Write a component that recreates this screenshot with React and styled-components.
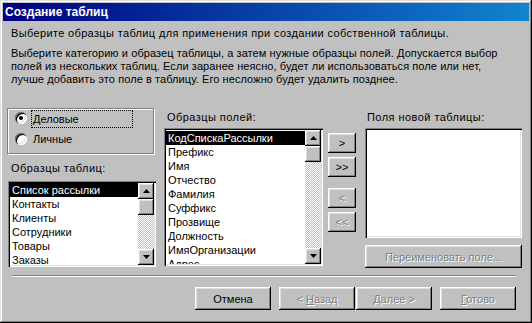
import React from "react";
import styled, { createGlobalStyle } from "styled-components";

const GlobalStyle = createGlobalStyle`
  body {
    margin: 0;
    background: #c0c0c0;
  }
  * {
    box-sizing: border-box;
  }
`;

const Window = styled.div`
  width: 532px;
  height: 323px;
  padding: 3px;
  background: #c0c0c0;
  box-shadow: inset -1px -1px #000, inset 1px 1px #dfdfdf,
    inset -2px -2px #808080, inset 2px 2px #fff;
  font-family: "Liberation Sans", Arial, sans-serif;
  font-size: 11px;
  color: #000;
  display: flex;
  flex-direction: column;
`;

const TitleBar = styled.div`
  height: 18px;
  background: linear-gradient(90deg, #000080, #1084d0);
  color: #fff;
  font-weight: bold;
  font-size: 12px;
  line-height: 18px;
  padding-left: 2px;
`;

const Body = styled.div`
  flex: 1;
  padding: 6px 7px 0 5px;
  display: flex;
  flex-direction: column;
`;

const Text = styled.p`
  margin: ${p => p.$mt || 0}px 0 0 3px;
  line-height: 13px;
  white-space: nowrap;
  letter-spacing: ${p => p.$ls || 0}px;
`;

const Main = styled.div`
  display: flex;
  align-items: flex-start;
  margin-top: 22px;
`;

const Column = styled.div`
  display: flex;
  flex-direction: column;
  width: ${p => p.$w}px;
  margin-left: ${p => p.$ml || 0}px;
  margin-top: ${p => p.$mt || 0}px;
`;

const GroupBox = styled.div`
  height: 46px;
  width: 147px;
  margin-left: -1px;
  border: 1px solid #808080;
  box-shadow: inset 1px 1px #fff, 1px 1px #fff;
  padding: 1px 0 0 7px;
`;

const RadioRow = styled.div`
  display: flex;
  align-items: center;
  height: ${p => p.$h}px;
`;

const RadioCircle = styled.span`
  position: relative;
  width: 12px;
  height: 12px;
  border-radius: 50%;
  background: #fff;
  box-shadow: inset 1px 1px #808080, inset 2px 2px #000,
    inset -1px -1px #fff, inset -2px -2px #dfdfdf;
  margin-top: ${p => p.$mt || 0}px;
  flex-shrink: 0;

  &::after {
    content: "";
    display: ${p => (p.$checked ? "block" : "none")};
    position: absolute;
    left: 4px;
    top: 4px;
    width: 4px;
    height: 4px;
    border-radius: 50%;
    background: #000;
  }
`;

const RadioLabel = styled.span`
  margin-left: 4px;
  width: 102px;
  height: 18px;
  line-height: 16px;
  padding-left: 1px;
  border: 1px dotted ${p => (p.$focus ? "#000" : "transparent")};
`;

const Label = styled.div`
  line-height: 14px;
  letter-spacing: 0.45px;
  margin-left: ${p => p.$ml || 3}px;
  margin-top: ${p => p.$mt || 0}px;
`;

const ListBox = styled.div`
  height: ${p => p.$h}px;
  margin-top: ${p => p.$mt || 0}px;
  padding: 2px;
  background: #fff;
  box-shadow: inset 1px 1px #808080, inset 2px 2px #000,
    inset -1px -1px #fff, inset -2px -2px #dfdfdf;
  display: flex;
`;

const Items = styled.div`
  flex: 1;
  overflow: hidden;
  padding-top: ${p => p.$pt || 0}px;
`;

const Item = styled.div`
  height: 14px;
  line-height: 14px;
  padding-left: 2px;
  white-space: nowrap;
  background: ${p => (p.$selected ? "#000" : "transparent")};
  color: ${p => (p.$selected ? "#fff" : "#000")};
`;

const raised = `
  background: #c0c0c0;
  box-shadow: inset -1px -1px #000, inset 1px 1px #fff,
    inset -2px -2px #808080, inset 2px 2px #dfdfdf;
`;

const ScrollBar = styled.div`
  width: 16px;
  display: flex;
  flex-direction: column;
`;

const ScrollButton = styled.div`
  ${raised}
  width: 16px;
  height: 16px;
  display: flex;
  align-items: center;
  justify-content: center;
  flex-shrink: 0;
`;

const Track = styled.div`
  flex: 1;
  background: repeating-conic-gradient(#fff 0 25%, #c0c0c0 0 50%) 0 0 / 2px 2px;
`;

const Button = styled.button`
  ${raised}
  border: none;
  padding: 0;
  margin: 0;
  font-family: inherit;
  font-size: 11px;
  font-weight: normal;
  width: ${p => p.$w}px;
  height: ${p => p.$h || 23}px;
  margin-top: ${p => p.$mt || 0}px;
  margin-left: ${p => p.$ml || 0}px;
  color: ${p => (p.disabled ? "#808080" : "#000")};
  text-shadow: ${p => (p.disabled ? "1px 1px 0 #fff" : "none")};
  flex-shrink: 0;
`;

const Separator = styled.div`
  margin: 7px 6px 0 4px;
  height: 2px;
  border-top: 1px solid #808080;
  border-bottom: 1px solid #fff;
`;

const Footer = styled.div`
  display: flex;
  justify-content: flex-end;
  margin: 10px 6px 0 0;
`;

const Arrow = ({ down }) => (
  <svg width="7" height="4" viewBox="0 0 7 4">
    <path d={down ? "M0 0h7L3.5 4z" : "M3.5 0L7 4H0z"} fill="#000" />
  </svg>
);

const Scroller = () => (
  <ScrollBar>
    <ScrollButton>
      <Arrow />
    </ScrollButton>
    <ScrollButton />
    <Track />
    <ScrollButton>
      <Arrow down />
    </ScrollButton>
  </ScrollBar>
);

const tables = ["Список рассылки", "Контакты", "Клиенты", "Сотрудники", "Товары", "Заказы"];
const fields = [
  "КодСпискаРассылки",
  "Префикс",
  "Имя",
  "Отчество",
  "Фамилия",
  "Суффикс",
  "Прозвище",
  "Должность",
  "ИмяОрганизации",
  "Адрес",
];

export default function App() {
  return (
    <Window>
      <GlobalStyle />
      <TitleBar>Создание таблиц</TitleBar>
      <Body>
        <Text $ls={0.35}>
          Выберите образцы таблиц для применения при создании собственной таблицы.
        </Text>
        <Text $mt={7} $ls={0.08}>
          Выберите категорию и образец таблицы, а затем нужные образцы полей. Допускается выбор
          <br />
          полей из нескольких таблиц. Если заранее неясно, будет ли использоваться поле или нет,
          <br />
          лучше добавить это поле в таблицу. Его несложно будет удалить позднее.
        </Text>
        <Main>
          <Column $w={148}>
            <GroupBox>
              <RadioRow $h={18}>
                <RadioCircle $checked $mt={-3} />
                <RadioLabel $focus>Деловые</RadioLabel>
              </RadioRow>
              <RadioRow $h={22}>
                <RadioCircle />
                <RadioLabel>Личные</RadioLabel>
              </RadioRow>
            </GroupBox>
            <Label $mt={7}>Образцы таблиц:</Label>
            <ListBox $h={86} $mt={6}>
              <Items>
                {tables.map((t, i) => (
                  <Item key={t} $selected={i === 0}>
                    {t}
                  </Item>
                ))}
              </Items>
              <Scroller />
            </ListBox>
          </Column>
          <Column $w={159} $ml={8}>
            <Label $mt={2}>Образцы полей:</Label>
            <ListBox $h={138} $mt={4}>
              <Items $pt={1}>
                {fields.map((f, i) => (
                  <Item key={f} $selected={i === 0}>
                    {f}
                  </Item>
                ))}
              </Items>
              <Scroller />
            </ListBox>
          </Column>
          <Column $w={28} $ml={5} $mt={25}>
            <Button $w={28} $h={20}>&gt;</Button>
            <Button $w={28} $h={20} $mt={4}>&gt;&gt;</Button>
            <Button $w={28} $h={20} $mt={11} disabled>&lt;</Button>
            <Button $w={28} $h={20} $mt={4} disabled>&lt;&lt;</Button>
          </Column>
          <Column $w={157} $ml={9}>
            <Label $mt={2} $ml={2}>Поля новой таблицы:</Label>
            <ListBox $h={110} $mt={4} />
            <Button $w={157} $mt={7} disabled>
              Переименовать поле...
            </Button>
          </Column>
        </Main>
        <Separator />
        <Footer>
          <Button $w={76}>Отмена</Button>
          <Button $w={76} $ml={8} disabled>
            &lt; <u>Н</u>азад
          </Button>
          <Button $w={76} $ml={1} disabled>
            <u>Д</u>алее &gt;
          </Button>
          <Button $w={76} $ml={8} disabled>
            <u>Г</u>отово
          </Button>
        </Footer>
      </Body>
    </Window>
  );
}
